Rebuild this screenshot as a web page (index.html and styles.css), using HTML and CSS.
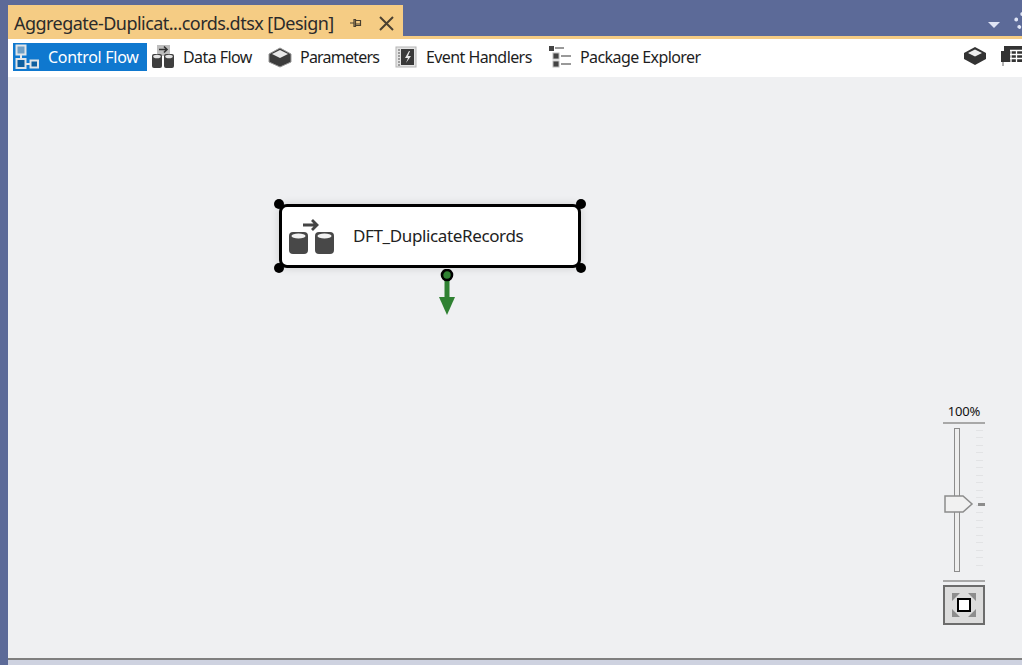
FILE: index.html
```html
<!DOCTYPE html>
<html lang="en">
<head>
	<meta charset="utf-8">
	<title>Aggregate-Duplicate-Records.dtsx [Design]</title>
	<link rel="stylesheet" href="styles.css">
</head>
<body>
	<div class="tabstrip">
		<div class="doc-tab">
			<span class="doc-title">Aggregate-Duplicat...cords.dtsx [Design]</span>
			<svg class="pin" width="12" height="12" viewBox="0 0 12 12"><path d="M0 6h4M4 2.500h1.500V9.500H4zM5.500 3.500h5v5h-5M5.500 7h5" fill="none" stroke="#4a4030" stroke-width="1.200"/></svg>
			<svg class="close" width="15" height="15" viewBox="0 0 15 15"><path d="M1 1l13 13M14 1L1 14" stroke="#4a4030" stroke-width="2"/></svg>
		</div>
		<div class="strip-right">
			<svg width="12" height="6" viewBox="0 0 12 6"><path d="M0 0h12L6 6z" fill="#dfe4f5"/></svg>
			<span class="gear"></span>
		</div>
	</div>

	<div class="designer">
		<div class="toolbar">
			<div class="tool active">
				<svg width="26" height="26" viewBox="0 0 26 26">
					<path d="M8 11v5M13 20h5" stroke="#e6e9ec" stroke-width="2"/>
					<rect x="3.500" y="1.500" width="9" height="9" fill="#6f9fc6" stroke="#e0e4e8" stroke-width="2"/>
					<rect x="3.500" y="15" width="9" height="9" fill="#0f5f9f" stroke="#e0e4e8" stroke-width="2"/>
					<rect x="17.500" y="16.500" width="7.500" height="7" fill="#0f5f9f" stroke="#e0e4e8" stroke-width="2"/>
				</svg>
				<span>Control Flow</span>
			</div>
			<div class="tool tool-data">
				<svg width="25" height="26" viewBox="0 0 25 26">
					<rect x="6" y="1" width="13" height="11" fill="#bdbdbd"/>
					<path d="M8 5.500h8M13 2.500l3 3-3 3" fill="none" stroke="#333" stroke-width="1.600"/>
					<rect x="1" y="10" width="10" height="14" rx="2" fill="#3f3f3f"/>
					<rect x="13" y="10" width="10" height="14" rx="2" fill="#3f3f3f"/>
					<ellipse cx="6" cy="12.500" rx="3.800" ry="1.800" fill="#e2e2e2"/>
					<ellipse cx="18" cy="12.500" rx="3.800" ry="1.800" fill="#e2e2e2"/>
				</svg>
				<span>Data Flow</span>
			</div>
			<div class="tool tool-params">
				<svg width="24" height="22" viewBox="0 0 24 22">
					<path d="M1 8L12 2l11 6v8l-11 5-11-5z" fill="#3c3c3c" stroke="#999"/>
					<path d="M4 8l8-4 8 4-8 4z" fill="#e8e8e8"/>
				</svg>
				<span>Parameters</span>
			</div>
			<div class="tool tool-events">
				<svg width="22" height="22" viewBox="0 0 22 22">
					<rect x="1" y="1" width="20" height="20" fill="#e4e4e4" stroke="#b5b5b5"/>
					<path d="M3 4h2M3 7h2M3 10h2M3 13h2M3 16h2M3 19h2" stroke="#555"/>
					<rect x="6" y="3" width="13" height="16" fill="#3a3a3a"/>
					<path d="M14 5l-4 7h3l-2 5 5-7h-3l2-5z" fill="#e8e8e8"/>
				</svg>
				<span>Event Handlers</span>
			</div>
			<div class="tool tool-explorer">
				<svg width="24" height="24" viewBox="0 0 24 24">
					<rect x="0" y="1" width="5" height="5" fill="#444"/>
					<path d="M6 3h9" stroke="#777" stroke-width="1.500"/>
					<rect x="4" y="8" width="6" height="6" fill="#444" stroke="#bbb"/>
					<path d="M12 11h10" stroke="#777" stroke-width="1.500"/>
					<rect x="4" y="16" width="6" height="6" fill="#444" stroke="#bbb"/>
					<path d="M12 19h10" stroke="#777" stroke-width="1.500"/>
				</svg>
				<span>Package Explorer</span>
			</div>
			<div class="tool-right">
				<svg width="22" height="19" viewBox="0 0 22 19">
					<path d="M0 7L11 1l11 6v6l-11 6-11-6z" fill="#333"/>
					<path d="M4 7l7-3.500L18 7l-7 3.500z" fill="#eee"/>
				</svg>
				<svg width="22" height="22" viewBox="0 0 22 22">
					<rect x="4" y="1" width="18" height="16" fill="#333"/>
					<path d="M10 5.500h12M10 9.500h12M10 13.500h12M11 5v12M16.500 5v12" stroke="#fff" stroke-width="1.300"/>
					<rect x="1" y="6" width="5" height="11" fill="#333"/>
					<path d="M3 17v4" stroke="#999" stroke-width="1.500"/>
				</svg>
			</div>
		</div>

		<div class="canvas">
			<div class="task">
				<svg width="46" height="38" viewBox="0 0 46 38">
					<path d="M14 7h14M23 2l5 5-5 5" fill="none" stroke="#444" stroke-width="2.800"/>
					<rect x="0" y="14" width="19" height="22" rx="4" fill="#484848"/>
					<rect x="26" y="14" width="19" height="22" rx="4" fill="#484848"/>
					<ellipse cx="9.500" cy="18" rx="7" ry="2.600" fill="#f2f2f2"/>
					<ellipse cx="35.500" cy="18" rx="7" ry="2.600" fill="#f2f2f2"/>
				</svg>
				<span class="task-name">DFT_DuplicateRecords</span>
				<i class="handle tl"></i><i class="handle tr"></i><i class="handle bl"></i><i class="handle br"></i>
			</div>

			<svg class="connector" width="18" height="48" viewBox="0 0 18 48">
				<path d="M9 8v24" stroke="#2f8132" stroke-width="5"/>
				<path d="M1 28h16l-8 18z" fill="#2f8132"/>
				<circle cx="9" cy="6" r="5" fill="#2f8132" stroke="#000" stroke-width="2.600"/>
			</svg>

			<div class="zoom">
				<div class="zoom-label">100%</div>
				<div class="zoom-slider">
					<div class="zoom-track"></div>
					<div class="zoom-ticks"></div>
					<svg class="zoom-thumb" width="30" height="18" viewBox="0 0 30 18"><path d="M1 1h18l9 8-9 8H1z" fill="#f1f1f1" stroke="#8c8c8c" stroke-width="1.500"/></svg>
					<div class="zoom-mark"></div>
				</div>
				<div class="zoom-fit">
					<svg width="24" height="24" viewBox="0 0 24 24">
						<path d="M0 0h8L5 3 3 5 0 8zM24 0v8l-3-3-2-2-3-3zM24 24h-8l3-3 2-2 3-3zM0 24v-8l3 3 2 2 3 3z" fill="#8d8d8d"/>
						<rect x="6" y="6" width="12" height="12" fill="#fff" stroke="#000" stroke-width="2"/>
					</svg>
				</div>
			</div>
		</div>
		<div class="hscroll"></div>
	</div>
</body>
</html>
```

FILE: styles.css
```css
html, body {
	margin: 0;
	height: 100%;
}
body {
	width: 1022px;
	height: 665px;
	overflow: hidden;
	background: #5c6a98;
	font-family: "Noto Sans", "Open Sans", sans-serif;
	display: flex;
	flex-direction: column;
}
.tabstrip {
	height: 36px;
	flex: none;
	display: flex;
	justify-content: space-between;
	padding: 5px 0 0 8px;
	box-sizing: border-box;
}
.doc-tab {
	width: 395px;
	height: 31px;
	background: #f5cc84;
	display: flex;
	align-items: center;
	color: #2b2b2b;
	font-size: 18px;
	padding: 5px 0 0 6px;
	box-sizing: border-box;
	letter-spacing: -0.53px;
	white-space: nowrap;
}
.doc-title {
	width: 336px;
}
.close {
	margin-left: 17px;
}
.strip-right {
	display: flex;
	align-items: center;
	gap: 14px;
	padding-top: 8px;
	margin-right: -10px;
}
.gear {
	width: 10px;
	height: 10px;
	border: 4px dotted #dfe4f5;
	border-radius: 50%;
	margin-top: -8px;
}
.designer {
	flex: 1;
	margin-left: 8px;
	display: flex;
	flex-direction: column;
	min-height: 0;
}
.toolbar {
	height: 41px;
	flex: none;
	box-sizing: border-box;
	background: #fff;
	border-top: 3px solid #f5cc84;
	display: flex;
	align-items: center;
	padding: 0 0 2px 5px;
	color: #1e1e1e;
	font-size: 16px;
	letter-spacing: -0.58px;
	white-space: nowrap;
}
.tool {
	display: flex;
	align-items: center;
	height: 28px;
	gap: 7px;
}
.tool.active {
	width: 134px;
	background: #0f78cf;
	color: #fff;
	gap: 9px;
	box-sizing: border-box;
	margin-right: 4px;
	letter-spacing: -0.3px;
}
.tool-data {
	width: 117px;
}
.tool-params {
	width: 127px;
	gap: 8px;
	letter-spacing: -0.78px;
}
.tool-events {
	width: 154px;
	gap: 9px;
}
.tool-right {
	margin-left: auto;
	display: flex;
	align-items: center;
	gap: 14px;
	padding-bottom: 3px;
}
.canvas {
	position: relative;
	flex: 1;
	background: #eff0f2;
}
.task {
	position: absolute;
	left: 271px;
	top: 127px;
	width: 302px;
	height: 64px;
	box-sizing: border-box;
	background: #fff;
	border: 3px solid #000;
	border-radius: 8px;
	display: flex;
	align-items: center;
	padding: 0 0 2px 7px;
	gap: 18px;
	box-shadow: 0 0 8px rgba(0, 0, 0, .15);
	font-size: 17px;
	letter-spacing: -0.37px;
	color: #222;
}
.task svg {
	margin-top: 3px;
}
.handle {
	position: absolute;
	width: 10px;
	height: 10px;
	border-radius: 50%;
	background: #000;
}
.tl { left: -8px; top: -8px; }
.tr { right: -8px; top: -8px; }
.bl { left: -8px; bottom: -8px; }
.br { right: -8px; bottom: -8px; }
.connector {
	position: absolute;
	left: 430px;
	top: 192px;
}
.zoom {
	position: absolute;
	left: 935px;
	top: 325px;
	width: 42px;
	display: flex;
	flex-direction: column;
	font-size: 13px;
	color: #111;
}
.zoom-label {
	height: 20px;
	text-align: center;
	border-bottom: 2px solid #a8a8a8;
	line-height: 19px;
	letter-spacing: -0.2px;
}
.zoom-slider {
	position: relative;
	height: 156px;
	border-bottom: 2px solid #a8a8a8;
}
.zoom-track {
	position: absolute;
	left: 11px;
	top: 4px;
	width: 6px;
	height: 144px;
	box-sizing: border-box;
	background: #eee;
	border: 1.500px solid #8c8c8c;
}
.zoom-ticks {
	position: absolute;
	left: 33px;
	top: 6px;
	width: 7px;
	height: 142px;
	background: repeating-linear-gradient(to bottom, #e2e3e5 0, #e2e3e5 1px, transparent 1px, transparent 7.500px);
}
.zoom-thumb {
	position: absolute;
	left: 1px;
	top: 71px;
}
.zoom-mark {
	position: absolute;
	left: 35px;
	top: 79px;
	width: 7px;
	height: 3px;
	background: #8c8c8c;
}
.zoom-fit {
	margin-top: 3px;
	width: 42px;
	height: 40px;
	box-sizing: border-box;
	background: #dcdcdc;
	border: 2px solid #6c6c6c;
	display: flex;
	align-items: center;
	justify-content: center;
}
.hscroll {
	height: 7px;
	flex: none;
	background: #ced2e0;
	border-top: 2px solid #7f7f7f;
	box-sizing: border-box;
}
```
